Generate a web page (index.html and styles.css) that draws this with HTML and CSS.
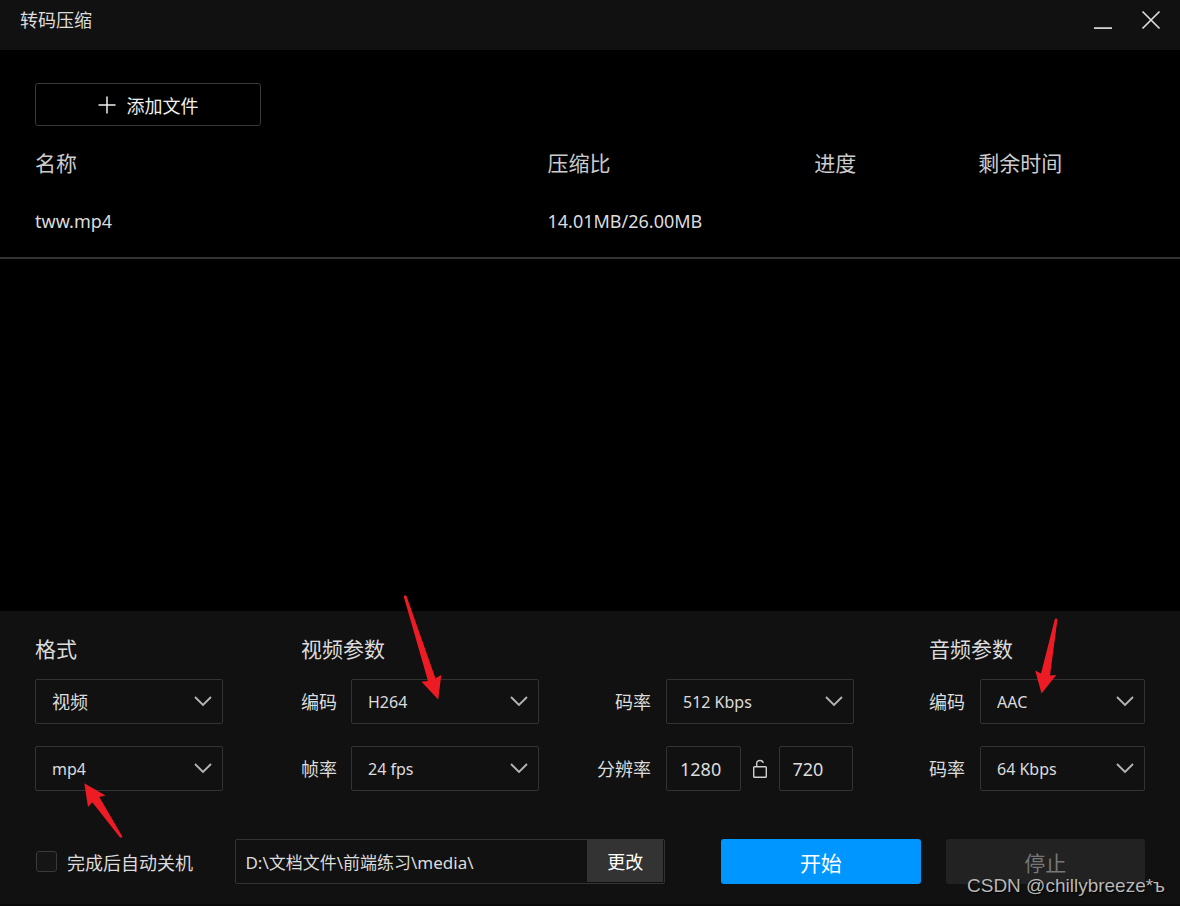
FILE: index.html
```html
<!DOCTYPE html>
<html lang="zh-CN">
<head>
<meta charset="utf-8">
<meta name="viewport" content="width=device-width, initial-scale=1">
<title>转码压缩</title>
<link rel="stylesheet" href="styles.css">
</head>
<body>
<svg class="defs" aria-hidden="true">
  <symbol id="chevron" viewBox="0 0 18 11"><path d="M1 1l8 8 8-8" fill="none" stroke="currentColor" stroke-width="1.9"/></symbol>
</svg>
<div class="app">
  <header class="titlebar">
    <h1 class="title">转码压缩</h1>
    <div class="window-controls">
      <button class="window-button" type="button" aria-label="最小化"><svg width="20" height="20" viewBox="0 0 20 20"><path d="M1 18.100h18" stroke="currentColor" stroke-width="1.700"/></svg></button>
      <button class="window-button" type="button" aria-label="关闭"><svg width="20" height="20" viewBox="0 0 20 20"><path d="M1.500 1.500l17 17M18.500 1.500l-17 17" stroke="currentColor" stroke-width="1.700"/></svg></button>
    </div>
  </header>

  <main class="files">
    <button class="add-button" type="button">
      <svg width="18" height="18" viewBox="0 0 18 18"><path d="M9 .5v17M.5 9h17" stroke="currentColor" stroke-width="1.500"/></svg>
      添加文件
    </button>
    <table class="file-table">
      <thead>
        <tr><th class="col-name">名称</th><th class="col-ratio">压缩比</th><th class="col-progress">进度</th><th>剩余时间</th></tr>
      </thead>
      <tbody>
        <tr><td>tww.mp4</td><td>14.01MB/26.00MB</td><td></td><td></td></tr>
      </tbody>
    </table>
  </main>

  <form class="panel">
    <div class="settings">
      <section class="group group-format">
        <h2 class="group-title">格式</h2>
        <div class="grid grid-format">
          <div class="picker picker-cjk"><select class="field" aria-label="类型"><option>视频</option></select><svg class="chevron"><use href="#chevron"/></svg></div>
          <div class="picker"><select class="field" aria-label="格式"><option>mp4</option></select><svg class="chevron"><use href="#chevron"/></svg>
            <svg class="arrow arrow-format" viewBox="0 0 40 56"><path d="M.3.2L21.500 12.500 15.300 14 38.300 53.500Q38.300 55.200 36 54.600L8.300 19.300 4 24z"/></svg>
          </div>
        </div>
      </section>

      <section class="group group-video">
        <h2 class="group-title">视频参数</h2>
        <div class="grid grid-video">
          <label class="label" for="vcodec">编码</label>
          <div class="picker"><select class="field" id="vcodec"><option>H264</option></select><svg class="chevron"><use href="#chevron"/></svg>
            <svg class="arrow arrow-video" viewBox="0 0 38 106"><path d="M-.3 1.500Q.5-.6 2.500.9L31.500 83.500 37.300 79.700 34.200 104.500 17.500 86.800 24 86z"/></svg>
          </div>
          <label class="label label-end" for="vrate">码率</label>
          <div class="picker"><select class="field" id="vrate"><option>512 Kbps</option></select><svg class="chevron"><use href="#chevron"/></svg></div>
          <label class="label" for="fps">帧率</label>
          <div class="picker"><select class="field" id="fps"><option>24 fps</option></select><svg class="chevron"><use href="#chevron"/></svg></div>
          <label class="label label-end" for="width">分辨率</label>
          <div class="resolution">
            <input class="field number" id="width" type="text" value="1280">
            <button class="lock" type="button" aria-label="锁定宽高比"><svg width="16" height="20" viewBox="0 0 16 20"><rect x="1.700" y="7.700" width="12.600" height="10.600" rx=".8" fill="none" stroke="currentColor" stroke-width="1.400"/><path d="M4.700 7.700V4.200Q4.700 1.500 8 1.500Q10.800 1.500 11.300 3.800" fill="none" stroke="currentColor" stroke-width="1.400"/></svg></button>
            <input class="field number" type="text" value="720" aria-label="高度">
          </div>
        </div>
      </section>

      <section class="group group-audio">
        <h2 class="group-title">音频参数</h2>
        <div class="grid grid-audio">
          <label class="label" for="acodec">编码</label>
          <div class="picker"><select class="field" id="acodec"><option>AAC</option></select><svg class="chevron"><use href="#chevron"/></svg>
            <svg class="arrow arrow-audio" viewBox="0 0 24 78"><path d="M19.800 1.200Q21-.4 22.500 1.200L15 57.500 21.300 57 6.500 75.500.2 52.500 6 55.600z"/></svg>
          </div>
          <label class="label" for="arate">码率</label>
          <div class="picker"><select class="field" id="arate"><option>64 Kbps</option></select><svg class="chevron"><use href="#chevron"/></svg></div>
        </div>
      </section>
    </div>

    <div class="actions">
      <label class="shutdown"><input class="checkbox" type="checkbox">完成后自动关机</label>
      <div class="path">
        <input class="path-input" type="text" value="D:\文档文件\前端练习\media\" aria-label="输出目录">
        <button class="path-button" type="button">更改</button>
      </div>
      <button class="action start" type="button">开始</button>
      <button class="action stop" type="button" disabled>停止</button>
    </div>
    <p class="watermark">CSDN @chillybreeze*ъ</p>
  </form>
</div>
</body>
</html>
```

FILE: styles.css
```css
* { box-sizing: border-box; }

body {
  margin: 0;
  background: #000;
  color: #dcdcdc;
  font-family: "Noto Sans", "Noto Sans CJK SC", sans-serif;
  font-size: 18px;
  font-weight: 400;
}

h1, h2, p { margin: 0; font-weight: inherit; }

button, input, select { margin: 0; font: inherit; color: inherit; }

button { padding: 0; border: 0; background: none; }

svg { display: block; }

.defs { display: none; }

.app { display: flex; flex-direction: column; min-height: 100vh; }

.titlebar {
  display: flex;
  justify-content: space-between;
  height: 50px;
  padding: 0 19px 0 20px;
  background: #111;
}

.title { font-size: 18px; line-height: 40px; }

.window-controls { display: flex; gap: 28px; height: 40px; }

.window-button { width: 20px; height: 40px; }

.files { flex: 1; padding-top: 33px; }

.add-button {
  display: flex;
  align-items: center;
  justify-content: center;
  gap: 11px;
  width: 226px;
  height: 43px;
  margin-left: 35px;
  border: 1px solid #393939;
  border-radius: 3px;
  color: #f0f0f0;
}

.file-table {
  width: 100%;
  table-layout: fixed;
  border-collapse: collapse;
  text-align: left;
  line-height: 30px;
}

.file-table th { padding: 22px 0 12px; font-size: 21px; font-weight: inherit; color: #ccc; }

.file-table td { padding: 16px 0 21px; border-bottom: 2px solid #333; }

.file-table th:first-child, .file-table td:first-child { padding-left: 35px; }

.col-name { width: 46.4%; }

.col-ratio { width: 22.6%; }

.col-progress { width: 13.9%; }

.panel {
  position: relative;
  padding: 23px 35px 20px;
  border-bottom: 2px solid #0a0a0a;
  background: #111;
}

.settings { display: flex; }

.group-format { flex: 188 1 0; }

.group-video { flex: 553 1 0; margin-left: 78px; }

.group-audio { flex: 216 1 0; margin-left: 75px; }

.group-title { margin-bottom: 15px; font-size: 21px; line-height: 30px; }

.grid { display: grid; row-gap: 22px; align-items: center; }

.grid-video { grid-template-columns: 36px 1fr 99px 1fr; column-gap: 14px; }

.grid-audio { grid-template-columns: 36px 1fr; column-gap: 15px; }

.label { padding-bottom: 2px; white-space: nowrap; }

.label-end { padding-right: 1px; text-align: right; }

.picker { position: relative; min-width: 0; font-size: 16px; }

.picker-cjk { font-size: 18px; }

.field {
  display: block;
  width: 100%;
  height: 45px;
  padding: 0 16px;
  border: 1px solid #333;
  border-radius: 2px;
  background: #111;
  appearance: none;
}

.chevron {
  position: absolute;
  top: 17px;
  right: 11px;
  width: 18px;
  height: 11px;
  color: #b4b4b4;
  pointer-events: none;
}

.resolution { display: flex; align-items: center; margin-right: 1px; }

.number { flex: 75 1 0; min-width: 0; padding: 0 13px; }

.lock { display: grid; place-items: center; width: 38px; height: 45px; color: #d0d0d0; }

.arrow { position: absolute; z-index: 1; fill: #ed1c24; pointer-events: none; }

.arrow-format { top: 37px; left: 49px; width: 40px; height: 56px; }

.arrow-video { top: -84px; left: 53px; width: 38px; height: 106px; }

.arrow-audio { top: -61px; left: 55px; width: 24px; height: 78px; }

.actions { display: flex; align-items: center; margin-top: 48px; }

.shutdown { display: flex; flex: 201 1 0; align-items: center; gap: 10px; white-space: nowrap; }

.checkbox {
  width: 21px;
  height: 21px;
  margin-left: 1px;
  border: 1px solid #3a3a3a;
  border-radius: 3px;
  background: #151515;
  appearance: none;
}

.path {
  display: flex;
  flex: 429 1 0;
  height: 45px;
  margin-right: 56px;
  border: 1px solid #333;
  border-radius: 2px;
}

.path-input {
  flex: 1;
  min-width: 0;
  padding: 0 9px;
  border: 0;
  background: transparent;
  font-size: 17px;
}

.path-button { width: 76px; margin: 0 1px 1px 0; background: #333; color: #fff; }

.action { flex: 200 1 0; height: 45px; border-radius: 3px; font-size: 21px; }

.start { margin-right: 25px; background: #0096ff; color: #fff; }

.stop { background: #222; color: #777; }

.watermark {
  position: absolute;
  right: 15px;
  bottom: 6px;
  color: #b8b8b8;
  font-family: "Liberation Sans", Arial, sans-serif;
  font-size: 19px;
  line-height: 24px;
  text-shadow: 1px 1px 1px #000;
  pointer-events: none;
}
```
